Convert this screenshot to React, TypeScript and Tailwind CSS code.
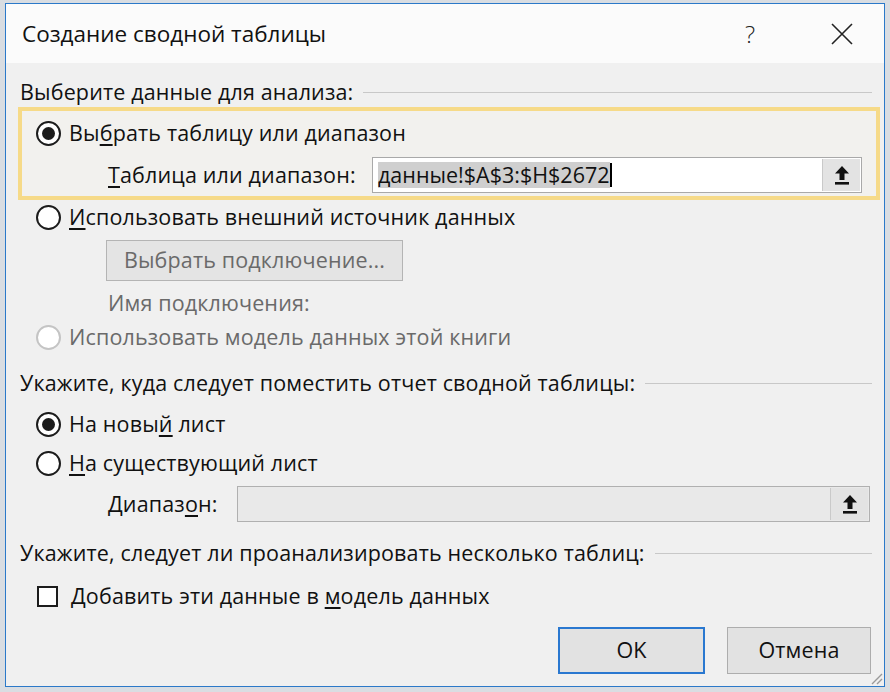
import type { ReactNode } from 'react';

const FONT = { fontFamily: '"Open Sans", "Noto Sans", sans-serif' };

function Radio({ checked, disabled }: { checked?: boolean; disabled?: boolean }) {
  return (
    <span
      className={
        'flex h-[25px] w-[25px] shrink-0 items-center justify-center rounded-full border-[2.5px] bg-white ' +
        (disabled ? 'border-[#c4c4c4]' : 'border-[#1c1c1c]')
      }
    >
      {checked && <span className="h-[13px] w-[13px] rounded-full bg-[#1c1c1c]" />}
    </span>
  );
}

function U({ children }: { children: ReactNode }) {
  return <span className="underline decoration-[1.5px] underline-offset-[3px]">{children}</span>;
}

function UpButton() {
  return (
    <span className="flex h-[32px] w-[38px] items-center justify-center border-l border-[#c9c9c9] bg-[#e3e3e3]">
      <svg width="18" height="22" viewBox="0 0 18 22">
        <path d="M9 2 L2 9.5 L6.5 9.5 L6.5 16 L11.5 16 L11.5 9.5 L16 9.5 Z" fill="#111" />
        <rect x="2" y="18" width="14" height="2.6" fill="#111" />
      </svg>
    </span>
  );
}

function SectionHeader({ text, className }: { text: string; className: string }) {
  return (
    <div className={'flex h-[30px] items-center pl-[14px] pr-[12px] ' + className}>
      <span className="whitespace-nowrap text-[21.5px] text-[#111]">{text}</span>
      <span className="ml-[10px] h-px flex-1 bg-[#c8c8c8]" />
    </div>
  );
}

export default function App() {
  return (
    <div className="h-[692px] w-[890px] overflow-hidden bg-[#d9dde2] pl-[5px] pt-[3px]" style={FONT}>
      <div className="relative flex h-[684px] w-[880px] flex-col border border-[#2b79c9] bg-[#f0f0f0]">
        {/* title bar */}
        <div className="flex h-[59px] shrink-0 items-center bg-[#fbfbfb] pl-[16px]">
          <span className="text-[22.5px] text-[#111]">Создание сводной таблицы</span>
          <span className="ml-auto mr-[76px] text-[24px] font-light text-[#222]">?</span>
          <svg width="22" height="22" viewBox="0 0 22 22" className="mr-[31px]">
            <path d="M1 1 L21 21 M21 1 L1 21" stroke="#222" strokeWidth="1.6" />
          </svg>
        </div>

        <div className="flex flex-col text-[21.5px] tracking-[0.15px] text-[#111]">
          <SectionHeader text="Выберите данные для анализа:" className="mt-[14px]" />

          {/* highlighted group */}
          <div className="ml-[12px] mr-[4px] flex h-[93px] flex-col border-4 border-[#f6da88] bg-[#f2f1ee] px-[14px]">
            <div className="flex h-[44px] items-center gap-[8px]">
              <Radio checked />
              <span>
                Вы<U>б</U>рать таблицу или диапазон
              </span>
            </div>
            <div className="flex h-[40px] items-center">
              <span className="ml-[72px] w-[264px] whitespace-nowrap">
                <U>Т</U>аблица или диапазон:
              </span>
              <div className="flex h-[36px] flex-1 items-center border border-[#a9a9a9] bg-white pl-[5px] pr-[1px]">
                <span className="bg-[#cfcfcf] leading-[26px] tracking-normal">данные!$A$3:$H$2672</span>
                <span className="h-[24px] w-[2px] bg-black" />
                <span className="ml-auto">
                  <UpButton />
                </span>
              </div>
            </div>
          </div>

          <div className="flex h-[34px] items-center gap-[8px] pl-[30px]">
            <Radio />
            <span>
              <U>И</U>спользовать внешний источник данных
            </span>
          </div>

          <div className="mt-[6px] pl-[100px]">
            <div className="flex h-[41px] w-[297px] items-center justify-center border border-[#b4b4b4] bg-[#e4e4e4] text-[#6a6a6a]">
              Выбрать подключение...
            </div>
          </div>

          <div className="mt-[5px] flex h-[34px] items-center pl-[102px] text-[#6a6a6a]">Имя подключения:</div>

          <div className="flex h-[34px] items-center gap-[8px] pl-[30px] text-[#6a6a6a]">
            <Radio disabled />
            <span>Использовать модель данных этой книги</span>
          </div>

          <SectionHeader text="Укажите, куда следует поместить отчет сводной таблицы:" className="mt-[14px]" />

          <div className="mt-[9px] flex h-[34px] items-center gap-[8px] pl-[30px]">
            <Radio checked />
            <span>
              На новы<U>й</U> лист
            </span>
          </div>

          <div className="mt-[5px] flex h-[34px] items-center gap-[8px] pl-[30px]">
            <Radio />
            <span>
              <U>Н</U>а существующий лист
            </span>
          </div>

          <div className="mt-[6px] flex h-[36px] items-center pl-[102px]">
            <span className="w-[129px]">
              Диапаз<U>о</U>н:
            </span>
            <div className="mr-[14px] flex h-[36px] flex-1 items-center justify-end border border-[#b0b0b0] bg-[#e9e9e9] pr-[1px]">
              <UpButton />
            </div>
          </div>

          <SectionHeader text="Укажите, следует ли проанализировать несколько таблиц:" className="mt-[16px]" />

          <div className="mt-[11px] flex h-[34px] items-center gap-[13px] pl-[31px]">
            <span className="h-[21px] w-[21px] border-2 border-[#1c1c1c] bg-white" />
            <span>
              Добавить эти данные в <U>м</U>одель данных
            </span>
          </div>

          <div className="mt-[14px] flex justify-end gap-[22px] pr-[13px]">
            <div className="flex h-[47px] w-[147px] items-center justify-center border-2 border-[#2a78d0] bg-[#e2e2e2]">
              OK
            </div>
            <div className="flex h-[47px] w-[144px] items-center justify-center border border-[#adadad] bg-[#e2e2e2]">
              Отмена
            </div>
          </div>
        </div>

        {/* resize grip */}
        <svg width="14" height="14" viewBox="0 0 14 14" className="absolute bottom-[1px] right-[1px]">
          <path d="M13 3 L3 13 M13 8 L8 13" stroke="#9a9a9a" strokeWidth="1.4" />
        </svg>
      </div>
    </div>
  );
}
